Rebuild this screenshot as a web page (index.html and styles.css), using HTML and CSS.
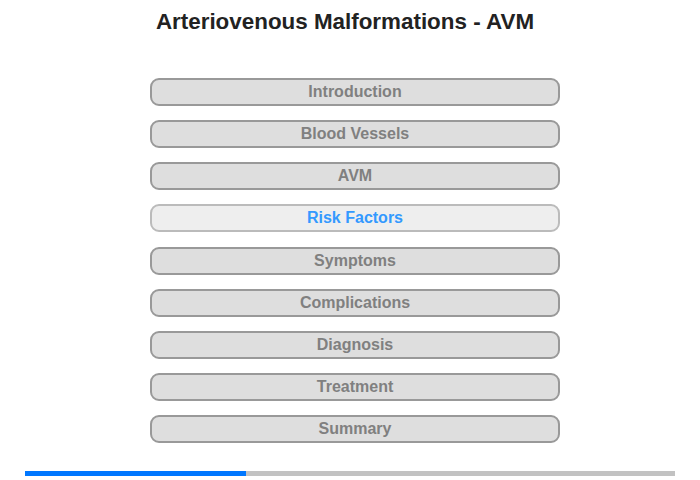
FILE: index.html
```html
<!DOCTYPE html>
<html lang="en">
    <head>
        <meta charset="UTF-8">
        <title>Arteriovenous Malformations - AVM</title>
        <link rel="stylesheet" href="styles.css">
    </head>
    <body>
        <header>
            <h1 class="titulo">Arteriovenous Malformations - AVM</h1>
        </header>
        <main class="menu">
            <button type="button" class="boton">Introduction</button>
            <button type="button" class="boton">Blood Vessels</button>
            <button type="button" class="boton">AVM</button>
            <button type="button" class="boton activo">Risk Factors</button>
            <button type="button" class="boton">Symptoms</button>
            <button type="button" class="boton">Complications</button>
            <button type="button" class="boton">Diagnosis</button>
            <button type="button" class="boton">Treatment</button>
            <button type="button" class="boton">Summary</button>
        </main>
        <footer class="progreso">
            <div class="barra" style="width: 34%"></div>
        </footer>
    </body>
</html>
```

FILE: styles.css
```css
* {
    box-sizing: border-box;
}
body {
    margin: 0;
    background: #ffffff;
    font-family: "Liberation Sans", Arial, sans-serif;
}
.titulo {
    margin: 0;
    padding: 8px 10px 0 0;
    height: 78px;
    text-align: center;
    font-size: 22.4px;
    line-height: 28px;
    font-weight: bold;
    color: #222222;
}
.menu {
    display: flex;
    flex-direction: column;
    gap: 14.125px;
    width: 410px;
    margin-left: 150px;
}
.boton {
    height: 28px;
    padding: 0;
    background: #dedede;
    border: 2px solid #999999;
    border-radius: 9px;
    color: #808080;
    font-family: "Liberation Sans", Arial, sans-serif;
    font-size: 16px;
    font-weight: bold;
    line-height: 24px;
    text-align: center;
    cursor: pointer;
}
.activo {
    background: #eeeeee;
    border-color: #bbbbbb;
    color: #3399ff;
}
.progreso {
    margin: 28px 0 0 25px;
    width: 650px;
    height: 5px;
    background: #c2c2c2;
}
.barra {
    height: 5px;
    background: #0077ff;
}
```
